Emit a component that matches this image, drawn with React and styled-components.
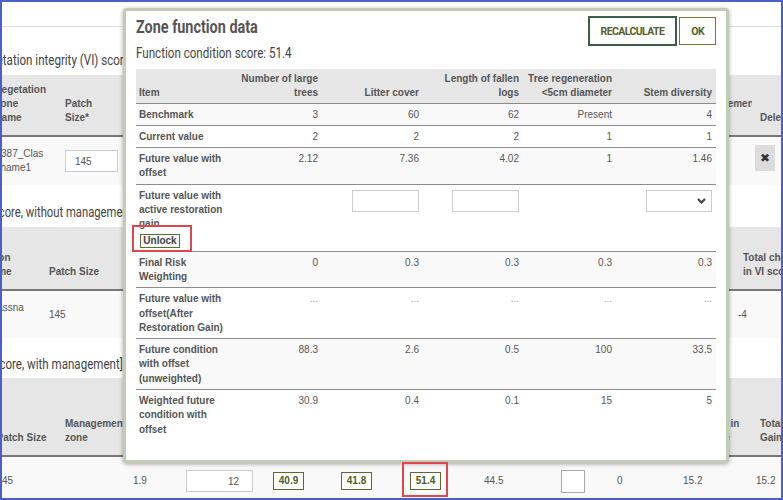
import React from "react";
import styled, { createGlobalStyle } from "styled-components";

const COND = `Roboto, "Liberation Sans", sans-serif`;
const SANS = `"Liberation Sans", Arial, sans-serif`;

const GlobalStyle = createGlobalStyle`
  html, body { margin: 0; padding: 0; background: #fff; }
  body { font-family: ${SANS}; }
  * { box-sizing: border-box; }
`;

const Frame = styled.div`
  position: relative;
  width: 783px;
  height: 500px;
  overflow: hidden;
  background: #fff;
  &::after {
    content: "";
    position: absolute;
    inset: 0;
    border: 2px solid #4b5fc8;
    pointer-events: none;
    z-index: 20;
  }
`;

/* condensed headline text (Roboto narrowed horizontally) */
const Narrow = styled.span`
  display: inline-block;
  white-space: nowrap;
  transform: scaleX(${(p) => p.$scale});
  transform-origin: left center;
`;

const Page = styled.div`
  width: 880px;
  margin-left: -60px;
`;

const TopBar = styled.div`
  height: 27px;
  border-bottom: 1px solid #dedede;
`;

const SectionTitle = styled.h3`
  margin: ${(p) => p.$top}px 0 ${(p) => p.$bottom}px 36.5px;
  height: 20px;
  line-height: 20px;
  font-family: ${COND};
  font-weight: 400;
  font-size: 15px;
  color: #444;
  white-space: nowrap;
`;

const DataTable = styled.div`
  display: grid;
  grid-template-columns: ${(p) => p.$cols};
  grid-template-rows: ${(p) => p.$head}px ${(p) => p.$row}px;
  font-size: 10px;
  line-height: 14px;
  color: #555;
`;

const HeadCell = styled.div`
  display: flex;
  align-items: flex-end;
  padding: 0 ${(p) => p.$pr ?? 8}px 10px ${(p) => p.$pl ?? 8}px;
  background: #e6e6e6;
  border-bottom: 2px solid #777;
  font-weight: 700;
  color: #555;
`;

const BodyCell = styled.div`
  display: flex;
  align-items: center;
  padding: 0 ${(p) => p.$pr ?? 8}px 0 ${(p) => p.$pl ?? 8}px;
  background: #f9f9f9;
  color: #555;
`;

const NameText = styled.span`
  word-break: break-all;
`;

const PageInput = styled.input`
  width: ${(p) => p.$w}px;
  height: 22px;
  border: 1px solid #ccc;
  background: #fff;
  padding: 0 ${(p) => p.$pr ?? 9}px 0 9px;
  font: 10px ${SANS};
  color: #555;
  text-align: ${(p) => p.$align || "left"};
  outline: none;
`;

const DeleteButton = styled.button`
  align-self: flex-start;
  width: 20px;
  height: 26px;
  margin-top: 8px;
  border: none;
  background: #dcdcdc;
  color: #333;
  font: 12px "DejaVu Sans", sans-serif;
  padding: 0;
  display: flex;
  align-items: center;
  justify-content: center;
`;

const ScoreBox = styled.span`
  display: inline-flex;
  align-items: center;
  justify-content: center;
  width: 31px;
  height: 18px;
  border: 1px solid #5b6a2b;
  background: #fff;
  font-weight: 700;
  font-size: 10px;
  color: #4e5a24;
`;

const CheckSquare = styled.span`
  display: block;
  width: 24px;
  height: 23px;
  border: 1px solid #a8a8a8;
  background: #fff;
`;

/* ---------- modal ---------- */

const Modal = styled.div`
  position: absolute;
  left: 123px;
  top: 8px;
  width: 606px;
  height: 455px;
  background: #fff;
  border: 3px solid #c2ccb4;
  border-radius: 4px;
  box-shadow: 0 1px 4px rgba(0, 0, 0, 0.35);
  padding: 5px 10px 0;
  z-index: 5;
`;

const ModalHeader = styled.div`
  display: flex;
  justify-content: space-between;
  height: 30px;
`;

const ModalTitle = styled.h2`
  margin: 0;
  line-height: 22px;
  font-family: ${COND};
  font-weight: 700;
  font-size: 18px;
  color: #555;
`;

const ButtonGroup = styled.div`
  display: flex;
  align-items: center;
  gap: 2px;
`;

const ActionButton = styled.button`
  height: ${(p) => (p.$primary ? 30 : 28)}px;
  padding: 0 11px;
  border: ${(p) => (p.$primary ? "2px solid #3d5e4a" : "1px solid #6b7a34")};
  background: #fff;
  font-family: ${COND};
  font-weight: 700;
  font-size: 10.5px;
  letter-spacing: -0.6px;
  color: #54602a;
`;

const ScoreLine = styled.div`
  height: 16px;
  line-height: 16px;
  font-family: ${COND};
  font-size: 14.5px;
  color: #444;
  margin-bottom: 7px;
`;

const MCOLS = "88px 98px 101px 100px 93px 100px";

const MRow = styled.div`
  display: grid;
  grid-template-columns: ${MCOLS};
  background: ${(p) => (p.$head ? "#e6e6e6" : p.$alt ? "#f9f9f9" : "#fff")};
  border-bottom: ${(p) => (p.$last ? "none" : "1px solid #8c8c8c")};
  font-size: 10px;
  line-height: 14.3px;
  color: #555;
`;

const MHeadCell = styled.div`
  display: flex;
  align-items: flex-end;
  justify-content: ${(p) => (p.$left ? "flex-start" : "flex-end")};
  text-align: ${(p) => (p.$left ? "left" : "right")};
  padding: 3px 4px 2px ${(p) => p.$pl ?? 3}px;
  font-weight: 700;
`;

const MCell = styled.div`
  padding: 4px ${(p) => (p.$item ? 0 : 4)}px 3px 3px;
  text-align: ${(p) => (p.$item ? "left" : "right")};
  font-weight: ${(p) => (p.$item ? 700 : 400)};
  color: ${(p) => (p.$muted ? "#9a9a9a" : "#555")};
`;

const FieldCell = styled.div`
  display: flex;
  justify-content: flex-end;
  padding: 5px 4px 0 3px;
`;

const SmallInput = styled.input`
  width: 67px;
  height: 22px;
  border: 1px solid #ccc;
  background: #fff;
  outline: none;
`;

const SelectBox = styled.div`
  width: 66px;
  height: 22px;
  border: 1px solid #ccc;
  background: #fff;
  display: flex;
  align-items: center;
  justify-content: flex-end;
  padding-right: 5px;
  color: #444;
`;

const UnlockButton = styled.button`
  display: block;
  width: 40px;
  height: 14px;
  margin: 2px 0 0 1px;
  padding: 0;
  border: 1px solid #5d6b2e;
  background: #f7f7f7;
  font: 700 10px/12px ${SANS};
  color: #444;
`;

const Highlight = styled.div`
  position: absolute;
  left: ${(p) => p.$x}px;
  top: ${(p) => p.$y}px;
  width: ${(p) => p.$w}px;
  height: ${(p) => p.$h}px;
  border: 2px solid #e0474c;
  pointer-events: none;
  z-index: 8;
`;

const modalRows = [
  { label: "Benchmark", vals: ["3", "60", "62", "Present", "4"] },
  { label: "Current value", vals: ["2", "2", "2", "1", "1"] },
  { label: "Future value with offset", vals: ["2.12", "7.36", "4.02", "1", "1.46"] },
  { label: "Future value with active restoration gain", active: true },
  { label: "Final Risk Weighting", vals: ["0", "0.3", "0.3", "0.3", "0.3"] },
  { label: "Future value with offset(After Restoration Gain)", vals: ["...", "...", "...", "...", "..."], muted: true },
  { label: "Future condition with offset (unweighted)", vals: ["88.3", "2.6", "0.5", "100", "33.5"] },
  { label: "Weighted future condition with offset", vals: ["30.9", "0.4", "0.1", "15", "5"] },
];

const Chevron = () => (
  <svg width="9" height="6" viewBox="0 0 9 6">
    <polyline points="1,1 4.5,4.5 8,1" fill="none" stroke="currentColor" strokeWidth="2.2" />
  </svg>
);

function ZoneModal() {
  return (
    <Modal>
      <ModalHeader>
        <ModalTitle>
          <Narrow $scale={0.8}>Zone function data</Narrow>
        </ModalTitle>
        <ButtonGroup>
          <ActionButton $primary>RECALCULATE</ActionButton>
          <ActionButton>OK</ActionButton>
        </ButtonGroup>
      </ModalHeader>
      <ScoreLine>
        <Narrow $scale={0.8}>Function condition score: 51.4</Narrow>
      </ScoreLine>
      <div>
        <MRow $head>
          <MHeadCell $left>Item</MHeadCell>
          <MHeadCell>Number of large trees</MHeadCell>
          <MHeadCell>Litter cover</MHeadCell>
          <MHeadCell>Length of fallen logs</MHeadCell>
          <MHeadCell $pl={2}>Tree regeneration &lt;5cm diameter</MHeadCell>
          <MHeadCell>Stem diversity</MHeadCell>
        </MRow>
        {modalRows.map((r, i) => (
          <MRow key={r.label} $alt={i % 2 === 0} $last={i === modalRows.length - 1}>
            <MCell $item>
              {r.label}
              {r.active && <UnlockButton>Unlock</UnlockButton>}
            </MCell>
            {r.active ? (
              <>
                <FieldCell />
                <FieldCell>
                  <SmallInput readOnly />
                </FieldCell>
                <FieldCell>
                  <SmallInput readOnly />
                </FieldCell>
                <FieldCell />
                <FieldCell>
                  <SelectBox>
                    <Chevron />
                  </SelectBox>
                </FieldCell>
              </>
            ) : (
              r.vals.map((v, j) => (
                <MCell key={j} $muted={r.muted}>
                  {v}
                </MCell>
              ))
            )}
          </MRow>
        ))}
      </div>
    </Modal>
  );
}

export default function App() {
  return (
    <>
      <GlobalStyle />
      <Frame>
        <Page>
          <TopBar />
          <SectionTitle $top={23} $bottom={5}>
            <Narrow $scale={0.77}>Vegetation integrity (VI) score</Narrow>
          </SectionTitle>
          <DataTable $cols="47.5px 69.5px 68px 1fr 64px 68px" $head={62} $row={48}>
            <HeadCell />
            <HeadCell $pr={12.5}>Vegetation zone name</HeadCell>
            <HeadCell>Patch Size*</HeadCell>
            <HeadCell />
            <HeadCell>Management zone</HeadCell>
            <HeadCell>Delete</HeadCell>
            <BodyCell />
            <BodyCell $pr={12.5}>
              <NameText>1387_Classname1</NameText>
            </BodyCell>
            <BodyCell>
              <PageInput $w={53} readOnly defaultValue="145" />
            </BodyCell>
            <BodyCell />
            <BodyCell />
            <BodyCell $pl={3}>
              <DeleteButton>✖</DeleteButton>
            </BodyCell>
          </DataTable>

          <SectionTitle $top={17} $bottom={5}>
            <Narrow $scale={0.75}>[VI score, without management]</Narrow>
          </SectionTitle>
          <DataTable $cols="12px 89px 72px 1fr 85px" $head={64} $row={47}>
            <HeadCell />
            <HeadCell $pr={13}>Vegetation zone name</HeadCell>
            <HeadCell>Patch Size</HeadCell>
            <HeadCell />
            <HeadCell>Total change in VI score</HeadCell>
            <BodyCell />
            <BodyCell $pr={13}>
              <NameText>1387_Classname1</NameText>
            </BodyCell>
            <BodyCell>145</BodyCell>
            <BodyCell />
            <BodyCell $pl={3}>-4</BodyCell>
          </DataTable>

          <SectionTitle $top={16} $bottom={4}>
            <Narrow $scale={0.77}>[VI score, with management]</Narrow>
          </SectionTitle>
          <DataTable
            $cols="48.5px 68.5px 68px 53px 87px 68px 69px 74px 77px 56px 66px 73px 72px"
            $head={79}
            $row={48}
          >
            <HeadCell />
            <HeadCell>Patch Size</HeadCell>
            <HeadCell>Management zone</HeadCell>
            <HeadCell />
            <HeadCell />
            <HeadCell />
            <HeadCell />
            <HeadCell />
            <HeadCell />
            <HeadCell />
            <HeadCell />
            <HeadCell $pl={16} $pr={2}>Change in VI score</HeadCell>
            <HeadCell $pl={12} $pr={14}>Total Gain</HeadCell>
            <BodyCell />
            <BodyCell>145</BodyCell>
            <BodyCell />
            <BodyCell>1.9</BodyCell>
            <BodyCell>
              <PageInput $w={67} $pr={13} $align="right" readOnly defaultValue="12" />
            </BodyCell>
            <BodyCell>
              <ScoreBox>40.9</ScoreBox>
            </BodyCell>
            <BodyCell>
              <ScoreBox>41.8</ScoreBox>
            </BodyCell>
            <BodyCell>
              <ScoreBox>51.4</ScoreBox>
            </BodyCell>
            <BodyCell>44.5</BodyCell>
            <BodyCell>
              <CheckSquare />
            </BodyCell>
            <BodyCell>0</BodyCell>
            <BodyCell>15.2</BodyCell>
            <BodyCell>15.2</BodyCell>
          </DataTable>
        </Page>

        <ZoneModal />
        <Highlight $x={132} $y={225} $w={60} $h={27} />
        <Highlight $x={402} $y={462} $w={46} $h={35} />
      </Frame>
    </>
  );
}
